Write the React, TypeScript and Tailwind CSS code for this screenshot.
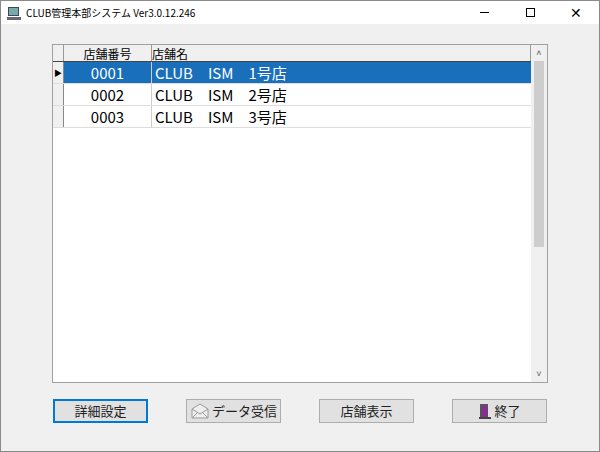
const FONT = { fontFamily: '"Noto Sans CJK JP", "Liberation Sans", sans-serif' }

const ROWS = [
  { no: "0001", name: "CLUB　ISM　1号店" },
  { no: "0002", name: "CLUB　ISM　2号店" },
  { no: "0003", name: "CLUB　ISM　3号店" },
]

function Btn({ label, icon, focus }: { label: string; icon?: React.ReactNode; focus?: boolean }) {
  return (
    <button
      className={`flex h-[24px] w-[95px] items-center justify-center gap-[2px] bg-[#e1e1e1] text-[13px] text-[#222] ${focus ? "border-2 border-[#0078d7]" : "border border-[#adadad]"}`}
    >
      {icon}
      {label}
    </button>
  )
}

export default function App() {
  return (
    <div className="flex h-[452px] w-[600px] flex-col border border-[#8a8a8a] bg-[#f0f0f0]" style={FONT}>
      <div className="flex h-[23px] items-center bg-white">
        <svg width="16" height="16" viewBox="0 0 16 16" className="ml-[5px] mr-[4px]">
          <rect x="2" y="2" width="11" height="9" fill="#445" />
          <rect x="3" y="3" width="9" height="7" fill="#7aa" />
          <rect x="1" y="12" width="14" height="3" fill="#667" />
        </svg>
        <span className="text-[10px] text-black">CLUB管理本部システム Ver3.0.12.246</span>
        <div className="ml-auto flex h-full">
          <div className="flex w-[46px] items-center justify-center"><div className="h-px w-[9px] bg-black" /></div>
          <div className="flex w-[46px] items-center justify-center"><div className="h-[9px] w-[9px] border border-black" /></div>
          <div className="flex w-[46px] items-center justify-center text-[14px] font-light">✕</div>
        </div>
      </div>
      <div className="flex flex-1 flex-col px-[51px] pt-[20px]">
        <div className="flex h-[339px] border border-[#a0a0a0] bg-white">
          <div className="flex-1">
            <div className="flex h-[17px] border-b border-[#444] bg-[#f0f0f0] text-[12px] leading-[17px] text-black">
              <div className="w-[11px] border-r border-[#999]" />
              <div className="w-[88px] border-r border-[#999] text-center">店舗番号</div>
              <div className="flex-1 border-r border-[#999]">店舗名</div>
            </div>
            {ROWS.map((r, i) => (
              <div key={r.no} className={`flex h-[22px] border-b border-[#ddd] text-[15px] leading-[21px] ${i === 0 ? "bg-[#1a6fba] text-white" : "text-black"}`}>
                <div className="flex w-[11px] items-center justify-center border-r border-[#888] bg-[#f0f0f0] text-[8px] text-black">{i === 0 ? "▶" : ""}</div>
                <div className="w-[88px] border-r border-[#ccc] text-center">{r.no}</div>
                <div className="flex-1 pl-[3px] whitespace-pre">{r.name}</div>
              </div>
            ))}
          </div>
          <div className="flex w-[16px] flex-col bg-[#f0f0f0]">
            <div className="flex h-[16px] items-center justify-center text-[9px] text-[#555]">˄</div>
            <div className="mx-[3px] h-[186px] bg-[#cdcdcd]" />
            <div className="flex-1" />
            <div className="flex h-[16px] items-center justify-center text-[9px] text-[#555]">˅</div>
          </div>
        </div>
        <div className="mt-[16px] flex justify-between px-[1px]">
          <Btn label="詳細設定" focus />
          <Btn
            label="データ受信"
            icon={
              <svg width="20" height="18" viewBox="0 0 20 18">
                <path d="M2 7 L10 2 L18 7 V16 H2 Z" fill="#eee" stroke="#999" />
                <path d="M2 7 L10 12 L18 7 M2 16 L8 10 M18 16 L12 10" fill="none" stroke="#999" />
              </svg>
            }
          />
          <Btn label="店舗表示" />
          <Btn
            label="終了"
            icon={
              <svg width="14" height="16" viewBox="0 0 14 16">
                <rect x="2" y="1" width="8" height="14" fill="#555" />
                <rect x="4" y="3" width="5" height="12" fill="#8a2a9a" />
                <rect x="1" y="14" width="12" height="2" fill="#444" />
              </svg>
            }
          />
        </div>
      </div>
    </div>
  )
}
